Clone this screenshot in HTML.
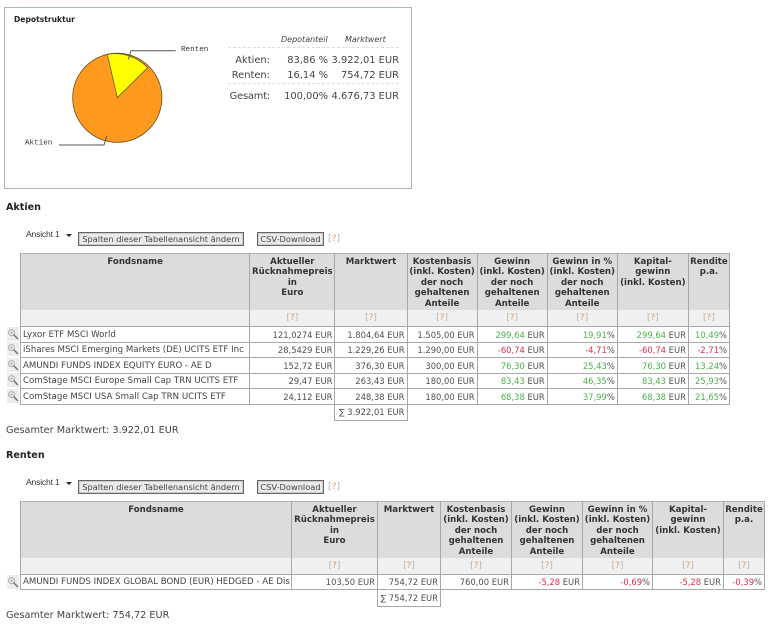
<!DOCTYPE html>
<html><head><meta charset="utf-8"><style>
html,body{margin:0;padding:0;background:#fff;width:770px;height:625px;overflow:hidden}
body{position:relative;font:9.7px/12px "DejaVu Sans","Liberation Sans",sans-serif;color:#444}
.a{position:absolute;white-space:nowrap}
.panel{position:absolute;left:4px;top:7px;width:406px;height:180px;border:1px solid #a9b4c8;background:#fff}
h3{position:absolute;margin:0;font:bold 9.6px/12px "DejaVu Sans",sans-serif;color:#222}
.r{text-align:right}
.st{font-size:9.9px;color:#444}
.dash{position:absolute;left:228px;width:171px;height:0;border-top:1px dashed #ddd}
.btn{position:absolute;top:232px;height:12px;border:1px solid #666;background:#eaeaea;box-shadow:inset 0 0 0 1px #ccc;font:8.25px/13px "DejaVu Sans",sans-serif;color:#444;text-align:center}
.sel{position:absolute;font:8.6px/12px "Liberation Sans",sans-serif;letter-spacing:-.2px;color:#333}
.q{color:#dc9f62;font-size:9.2px}.q i{font-style:normal;color:#b5b5b5}
table{position:absolute;left:20px;border-collapse:collapse;table-layout:fixed;font-size:8.4px}
td,th{border:1px solid #a8a8a8;padding:0 2px;overflow:hidden;white-space:nowrap}
th{background:#dcdcdc;font-weight:bold;color:#333;font-size:8.6px;line-height:10.4px;vertical-align:top;text-align:center;padding:3px 0 0;border-bottom:0;border-top-color:#b0b0b0}
tr.h1 th{height:53px}
td.qq{background:#f0f0f0;text-align:center;height:16px;border-left:1px solid #a8a8a8;border-top:0;line-height:15px;font-size:9px}
td{text-align:right;height:14px;line-height:14px;background:#fff;color:#505050}
tr.t td{height:15px}
td.n{text-align:left;color:#444;font-size:8.65px}
.g{color:#4cb04c}.d{color:#d8324a}
td.sum{border:1px solid #a8a8a8}
td.nb{border:0;background:transparent}
.ic{position:absolute;left:7px;width:12px;height:14px;background:#ececec}
.ic svg{position:absolute;left:0;top:1px}
</style></head><body>
<div style="position:absolute;left:0;top:0;width:770px;height:625px;filter:blur(.3px)">
<div class="panel"></div>
<h3 style="left:14px;top:14px;font-size:7.6px">Depotstruktur</h3>
<svg class="a" style="left:0;top:0" width="420" height="190">
<circle cx="117.3" cy="97.8" r="44.6" fill="#ff9a1f" stroke="#6a4a16" stroke-width=".8"/>
<path d="M117.3 97.8L107.3 54.3A44.6 44.6 0 0 1 147.7 67.7Z" fill="#ffff00" stroke="#5f5a10" stroke-width=".8"/>
<path d="M128.3 59.3L131 50.7H175.7M106.7 136L104 145H59" fill="none" stroke="#555" stroke-width="1"/>
<text x="181" y="51" font-family="Liberation Mono" font-size="7.6" fill="#333">Renten</text>
<text x="25" y="144.5" font-family="Liberation Mono" font-size="7.6" fill="#333">Aktien</text>
</svg>
<div class="a" style="left:281px;top:34px;font-style:italic;font-size:8px">Depotanteil</div>
<div class="a" style="left:345px;top:34px;font-style:italic;font-size:8px">Marktwert</div>
<div class="dash" style="top:47px"></div>
<div class="dash" style="top:83px"></div>
<div class="a r st" style="right:500px;top:55px">Aktien:</div>
<div class="a r st" style="right:442px;top:55px">83,86 %</div>
<div class="a r st" style="right:371px;top:55px">3.922,01 EUR</div>
<div class="a r st" style="right:500px;top:70px">Renten:</div>
<div class="a r st" style="right:442px;top:70px">16,14 %</div>
<div class="a r st" style="right:371px;top:70px">754,72 EUR</div>
<div class="a r st" style="right:500px;top:91px;letter-spacing:-.2px">Gesamt:</div>
<div class="a r st" style="right:442px;top:91px">100,00%</div>
<div class="a r st" style="right:371px;top:91px">4.676,73 EUR</div>

<h3 style="left:6px;top:202px">Aktien</h3>
<div class="sel" style="left:26px;top:228px">Ansicht 1</div>
<svg class="a" style="left:66px;top:234px" width="8" height="4"><path d="M0 0H6L3 3Z" fill="#222"/></svg>
<div class="btn" style="left:78px;width:164px">Spalten dieser Tabellenansicht ändern</div>
<div class="btn" style="left:257px;width:65px">CSV-Download</div>
<div class="a" style="left:328px;top:233px"><span class="q"><i>[</i>?<i>]</i></span></div>

<table style="top:253px;width:710px">
<colgroup><col style="width:229px"><col style="width:85px"><col style="width:72px"><col style="width:70px"><col style="width:70px"><col style="width:70px"><col style="width:71px"><col style="width:41px"></colgroup>
<tr class="h1"><th>Fondsname</th><th>Aktueller<br>Rücknahmepreis<br>in<br>Euro</th><th>Marktwert</th><th>Kostenbasis<br>(inkl. Kosten)<br>der noch<br>gehaltenen<br>Anteile</th><th>Gewinn<br>(inkl. Kosten)<br>der noch<br>gehaltenen<br>Anteile</th><th>Gewinn in %<br>(inkl. Kosten)<br>der noch<br>gehaltenen<br>Anteile</th><th>Kapital-<br>gewinn<br>(inkl. Kosten)</th><th>Rendite<br>p.a.</th></tr>
<tr><td class="qq"></td><td class="qq q"><i>[</i>?<i>]</i></td><td class="qq q"><i>[</i>?<i>]</i></td><td class="qq q"><i>[</i>?<i>]</i></td><td class="qq q"><i>[</i>?<i>]</i></td><td class="qq q"><i>[</i>?<i>]</i></td><td class="qq q"><i>[</i>?<i>]</i></td><td class="qq q"><i>[</i>?<i>]</i></td></tr>
<tr class="t"><td class="n">Lyxor ETF MSCI World</td><td>121,0274 EUR</td><td>1.804,64 EUR</td><td>1.505,00 EUR</td><td><span class="g">299,64</span> EUR</td><td><span class="g">19,91</span>%</td><td><span class="g">299,64</span> EUR</td><td><span class="g">10,49</span>%</td></tr>
<tr><td class="n">iShares MSCI Emerging Markets (DE) UCITS ETF Inc</td><td>28,5429 EUR</td><td>1.229,26 EUR</td><td>1.290,00 EUR</td><td><span class="d">-60,74</span> EUR</td><td><span class="d">-4,71</span>%</td><td><span class="d">-60,74</span> EUR</td><td><span class="d">-2,71</span>%</td></tr>
<tr class="t"><td class="n">AMUNDI FUNDS INDEX EQUITY EURO - AE D</td><td>152,72 EUR</td><td>376,30 EUR</td><td>300,00 EUR</td><td><span class="g">76,30</span> EUR</td><td><span class="g">25,43</span>%</td><td><span class="g">76,30</span> EUR</td><td><span class="g">13,24</span>%</td></tr>
<tr><td class="n">ComStage MSCI Europe Small Cap TRN UCITS ETF</td><td>29,47 EUR</td><td>263,43 EUR</td><td>180,00 EUR</td><td><span class="g">83,43</span> EUR</td><td><span class="g">46,35</span>%</td><td><span class="g">83,43</span> EUR</td><td><span class="g">25,93</span>%</td></tr>
<tr class="t"><td class="n">ComStage MSCI USA Small Cap TRN UCITS ETF</td><td>24,112 EUR</td><td>248,38 EUR</td><td>180,00 EUR</td><td><span class="g">68,38</span> EUR</td><td><span class="g">37,99</span>%</td><td><span class="g">68,38</span> EUR</td><td><span class="g">21,65</span>%</td></tr>
<tr><td class="nb"></td><td class="nb"></td><td class="sum" style="height:15px;line-height:13px">∑ 3.922,01 EUR</td><td class="nb" colspan="5"></td></tr>
</table>
<div class="ic" style="top:327px"><svg width="12" height="12"><circle cx="4.5" cy="4.5" r="2.8" fill="#fff" stroke="#9aa89a"/><path d="M3 4.5H6M4.5 3V6" stroke="#9aa89a" stroke-width=".7"/><path d="M6.8 6.8L11 11" stroke="#777" stroke-width="1.5"/></svg></div>
<div class="ic" style="top:342px"><svg width="12" height="12"><circle cx="4.5" cy="4.5" r="2.8" fill="#fff" stroke="#9aa89a"/><path d="M3 4.5H6M4.5 3V6" stroke="#9aa89a" stroke-width=".7"/><path d="M6.8 6.8L11 11" stroke="#777" stroke-width="1.5"/></svg></div>
<div class="ic" style="top:358px"><svg width="12" height="12"><circle cx="4.5" cy="4.5" r="2.8" fill="#fff" stroke="#9aa89a"/><path d="M3 4.5H6M4.5 3V6" stroke="#9aa89a" stroke-width=".7"/><path d="M6.8 6.8L11 11" stroke="#777" stroke-width="1.5"/></svg></div>
<div class="ic" style="top:373px"><svg width="12" height="12"><circle cx="4.5" cy="4.5" r="2.8" fill="#fff" stroke="#9aa89a"/><path d="M3 4.5H6M4.5 3V6" stroke="#9aa89a" stroke-width=".7"/><path d="M6.8 6.8L11 11" stroke="#777" stroke-width="1.5"/></svg></div>
<div class="ic" style="top:389px"><svg width="12" height="12"><circle cx="4.5" cy="4.5" r="2.8" fill="#fff" stroke="#9aa89a"/><path d="M3 4.5H6M4.5 3V6" stroke="#9aa89a" stroke-width=".7"/><path d="M6.8 6.8L11 11" stroke="#777" stroke-width="1.5"/></svg></div>
<div class="a" style="left:6px;top:425px">Gesamter Marktwert: 3.922,01 EUR</div>

<h3 style="left:6px;top:450px">Renten</h3>
<div class="sel" style="left:26px;top:476px">Ansicht 1</div>
<svg class="a" style="left:66px;top:482px" width="8" height="4"><path d="M0 0H6L3 3Z" fill="#222"/></svg>
<div class="btn" style="left:78px;width:164px;top:480px">Spalten dieser Tabellenansicht ändern</div>
<div class="btn" style="left:257px;width:65px;top:480px">CSV-Download</div>
<div class="a" style="left:328px;top:481px"><span class="q"><i>[</i>?<i>]</i></span></div>

<table style="top:501px;width:744px">
<colgroup><col style="width:271px"><col style="width:86px"><col style="width:63px"><col style="width:71px"><col style="width:71px"><col style="width:70px"><col style="width:71px"><col style="width:41px"></colgroup>
<tr class="h1"><th>Fondsname</th><th>Aktueller<br>Rücknahmepreis<br>in<br>Euro</th><th>Marktwert</th><th>Kostenbasis<br>(inkl. Kosten)<br>der noch<br>gehaltenen<br>Anteile</th><th>Gewinn<br>(inkl. Kosten)<br>der noch<br>gehaltenen<br>Anteile</th><th>Gewinn in %<br>(inkl. Kosten)<br>der noch<br>gehaltenen<br>Anteile</th><th>Kapital-<br>gewinn<br>(inkl. Kosten)</th><th>Rendite<br>p.a.</th></tr>
<tr><td class="qq"></td><td class="qq q"><i>[</i>?<i>]</i></td><td class="qq q"><i>[</i>?<i>]</i></td><td class="qq q"><i>[</i>?<i>]</i></td><td class="qq q"><i>[</i>?<i>]</i></td><td class="qq q"><i>[</i>?<i>]</i></td><td class="qq q"><i>[</i>?<i>]</i></td><td class="qq q"><i>[</i>?<i>]</i></td></tr>
<tr><td class="n">AMUNDI FUNDS INDEX GLOBAL BOND (EUR) HEDGED - AE Dis</td><td>103,50 EUR</td><td>754,72 EUR</td><td>760,00 EUR</td><td><span class="d">-5,28</span> EUR</td><td><span class="d">-0,69</span>%</td><td><span class="d">-5,28</span> EUR</td><td><span class="d">-0,39</span>%</td></tr>
<tr><td class="nb"></td><td class="nb"></td><td class="sum" style="height:16px">∑ 754,72 EUR</td><td class="nb" colspan="5"></td></tr>
</table>
<div class="ic" style="top:575px"><svg width="12" height="12"><circle cx="4.5" cy="4.5" r="2.8" fill="#fff" stroke="#9aa89a"/><path d="M3 4.5H6M4.5 3V6" stroke="#9aa89a" stroke-width=".7"/><path d="M6.8 6.8L11 11" stroke="#777" stroke-width="1.5"/></svg></div>
<div class="a" style="left:6px;top:610px">Gesamter Marktwert: 754,72 EUR</div>
</div>
</body></html>
